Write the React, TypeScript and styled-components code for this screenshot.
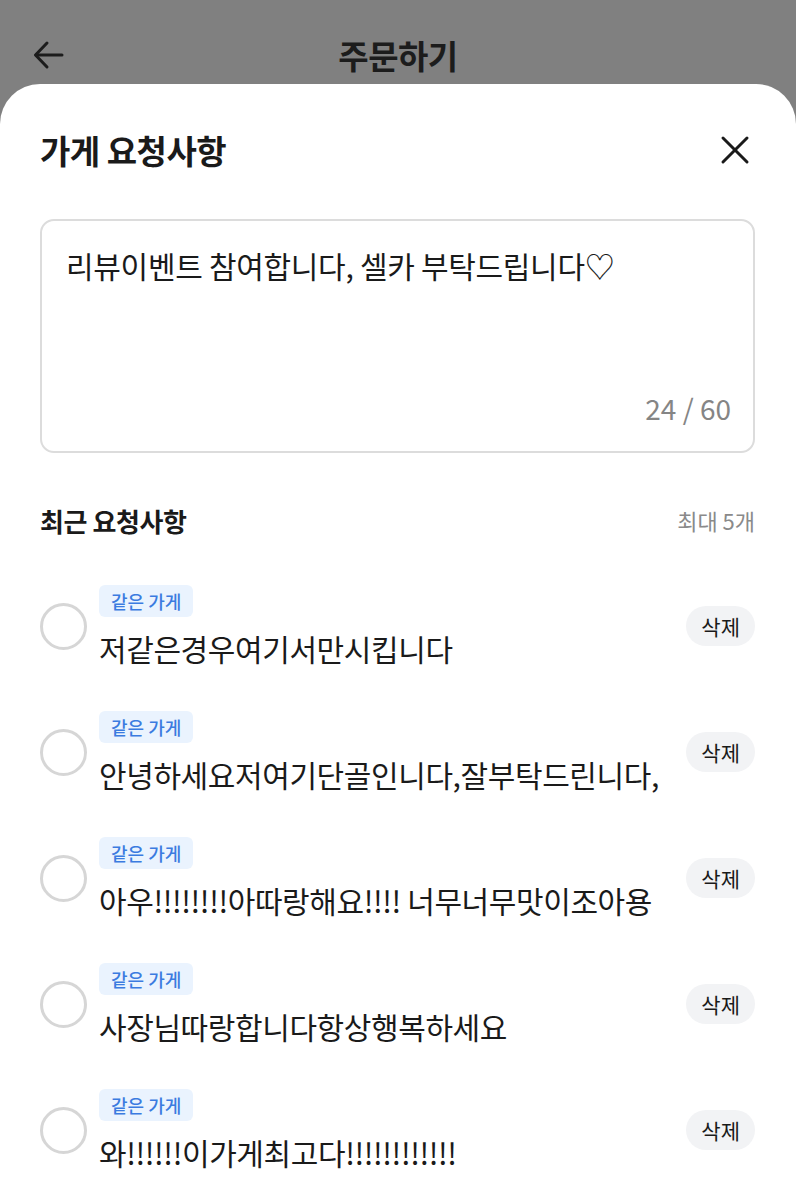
import React from 'react';
import styled, { createGlobalStyle } from 'styled-components';

type Request = {
    id: number;
    text: string;
};

const requests: Request[] = [
    { id: 1, text: '저같은경우여기서만시킵니다' },
    { id: 2, text: '안녕하세요저여기단골인니다,잘부탁드린니다,' },
    { id: 3, text: '아우!!!!!!!!아따랑해요!!!! 너무너무맛이조아용' },
    { id: 4, text: '사장님따랑합니다항상행복하세요' },
    { id: 5, text: '와!!!!!!이가게최고다!!!!!!!!!!!!' },
];

const App: React.FC = () => {
    return (
        <>
            <GlobalStyle />
            <Page>
                <TopBar>
                    <BackButton aria-label="뒤로">
                        <svg width="34" height="34" viewBox="0 0 34 34" fill="none" stroke="#1c1c1c" strokeWidth="3" strokeLinecap="round" strokeLinejoin="round">
                            <path d="M30 17H4" />
                            <path d="M15 5L3.5 17L15 29" />
                        </svg>
                    </BackButton>
                    <TopTitle>주문하기</TopTitle>
                </TopBar>

                <Sheet>
                    <SheetHeader>
                        <SheetTitle>가게 요청사항</SheetTitle>
                        <CloseButton aria-label="닫기">
                            <svg width="30" height="30" viewBox="0 0 30 30" fill="none" stroke="#1a1a1a" strokeWidth="3" strokeLinecap="round">
                                <path d="M3 3L27 27" />
                                <path d="M27 3L3 27" />
                            </svg>
                        </CloseButton>
                    </SheetHeader>

                    <InputBox>
                        <InputText>리뷰이벤트 참여합니다, 셀카 부탁드립니다♡</InputText>
                        <Counter>24 / 60</Counter>
                    </InputBox>

                    <SectionHeader>
                        <SectionTitle>최근 요청사항</SectionTitle>
                        <SectionNote>최대 5개</SectionNote>
                    </SectionHeader>

                    <List>
                        {requests.map((r) => (
                            <Item key={r.id}>
                                <Radio />
                                <ItemBody>
                                    <Tag>같은 가게</Tag>
                                    <ItemText>{r.text}</ItemText>
                                </ItemBody>
                                <DeleteButton>삭제</DeleteButton>
                            </Item>
                        ))}
                    </List>
                </Sheet>
            </Page>
        </>
    );
};

const GlobalStyle = createGlobalStyle`
    * {
        box-sizing: border-box;
    }
    body {
        margin: 0;
        background: #ffffff;
        font-family: "Noto Sans CJK KR", "Noto Sans", sans-serif;
        color: #1a1a1a;
    }
`;

// Серый фон под шторкой
const Page = styled.div`
    width: 796px;
    height: 1200px;
    overflow: hidden;
    background-color: #808080;
    display: flex;
    flex-direction: column;
`;

const TopBar = styled.div`
    height: 84px;
    flex-shrink: 0;
    padding-top: 26px;
    display: flex;
    align-items: center;
    justify-content: center;
    position: relative;
`;

const BackButton = styled.button`
    position: absolute;
    left: 32px;
    top: 38px;
    padding: 0;
    border: none;
    background: none;
    display: flex;
`;

const TopTitle = styled.h1`
    margin: 0;
    font-size: 33px;
    font-weight: 700;
    line-height: 40px;
    color: #1c1c1c;
    letter-spacing: -0.5px;
`;

// Белая шторка
const Sheet = styled.div`
    flex: 1;
    background-color: #ffffff;
    border-radius: 40px 40px 0 0;
    padding: 36px 41px 0 40px;
    display: flex;
    flex-direction: column;
`;

const SheetHeader = styled.div`
    height: 60px;
    display: flex;
    align-items: center;
    justify-content: space-between;
`;

const SheetTitle = styled.h2`
    margin: 0;
    font-size: 33px;
    font-weight: 700;
    letter-spacing: -0.5px;
    color: #1a1a1a;
`;

const CloseButton = styled.button`
    padding: 0;
    border: none;
    background: none;
    display: flex;
    margin-right: 5px;
`;

const InputBox = styled.div`
    margin-top: 39px;
    height: 234px;
    border: 2px solid #dcdcdc;
    border-radius: 14px;
    padding: 26px 22px 25px 24px;
    display: flex;
    flex-direction: column;
    justify-content: space-between;
`;

const InputText = styled.div`
    font-size: 30px;
    line-height: 36px;
    color: #1a1a1a;
    letter-spacing: -0.3px;
`;

const Counter = styled.div`
    align-self: flex-end;
    font-size: 28px;
    line-height: 36px;
    color: #858585;
`;

const SectionHeader = styled.div`
    margin-top: 49px;
    height: 36px;
    display: flex;
    align-items: center;
    justify-content: space-between;
`;

const SectionTitle = styled.h3`
    margin: 0;
    font-size: 26px;
    font-weight: 700;
    letter-spacing: -0.4px;
    color: #1a1a1a;
`;

const SectionNote = styled.span`
    font-size: 22px;
    color: #8a8a8a;
`;

const List = styled.div`
    margin-top: 47px;
    display: flex;
    flex-direction: column;
    gap: 45px;
`;

const Item = styled.div`
    display: flex;
    align-items: center;
    gap: 12px;
`;

const Radio = styled.span`
    width: 47px;
    height: 47px;
    border-radius: 50%;
    border: 3px solid #d6d6d6;
    flex-shrink: 0;
    margin-top: 2px;
`;

const ItemBody = styled.div`
    flex: 1;
    display: flex;
    flex-direction: column;
    align-items: flex-start;
    gap: 13px;
`;

const Tag = styled.span`
    height: 32px;
    padding: 0 12px;
    display: flex;
    align-items: center;
    border-radius: 6px;
    background-color: #eaf3fe;
    color: #3b7be0;
    font-size: 18px;
    font-weight: 500;
`;

const ItemText = styled.div`
    font-size: 30px;
    line-height: 36px;
    letter-spacing: -0.4px;
    color: #1a1a1a;
`;

const DeleteButton = styled.button`
    flex-shrink: 0;
    height: 40px;
    padding: 0 15px;
    border: none;
    border-radius: 20px;
    background-color: #f2f3f5;
    color: #1a1a1a;
    font-family: inherit;
    font-size: 21px;
`;

export default App;
